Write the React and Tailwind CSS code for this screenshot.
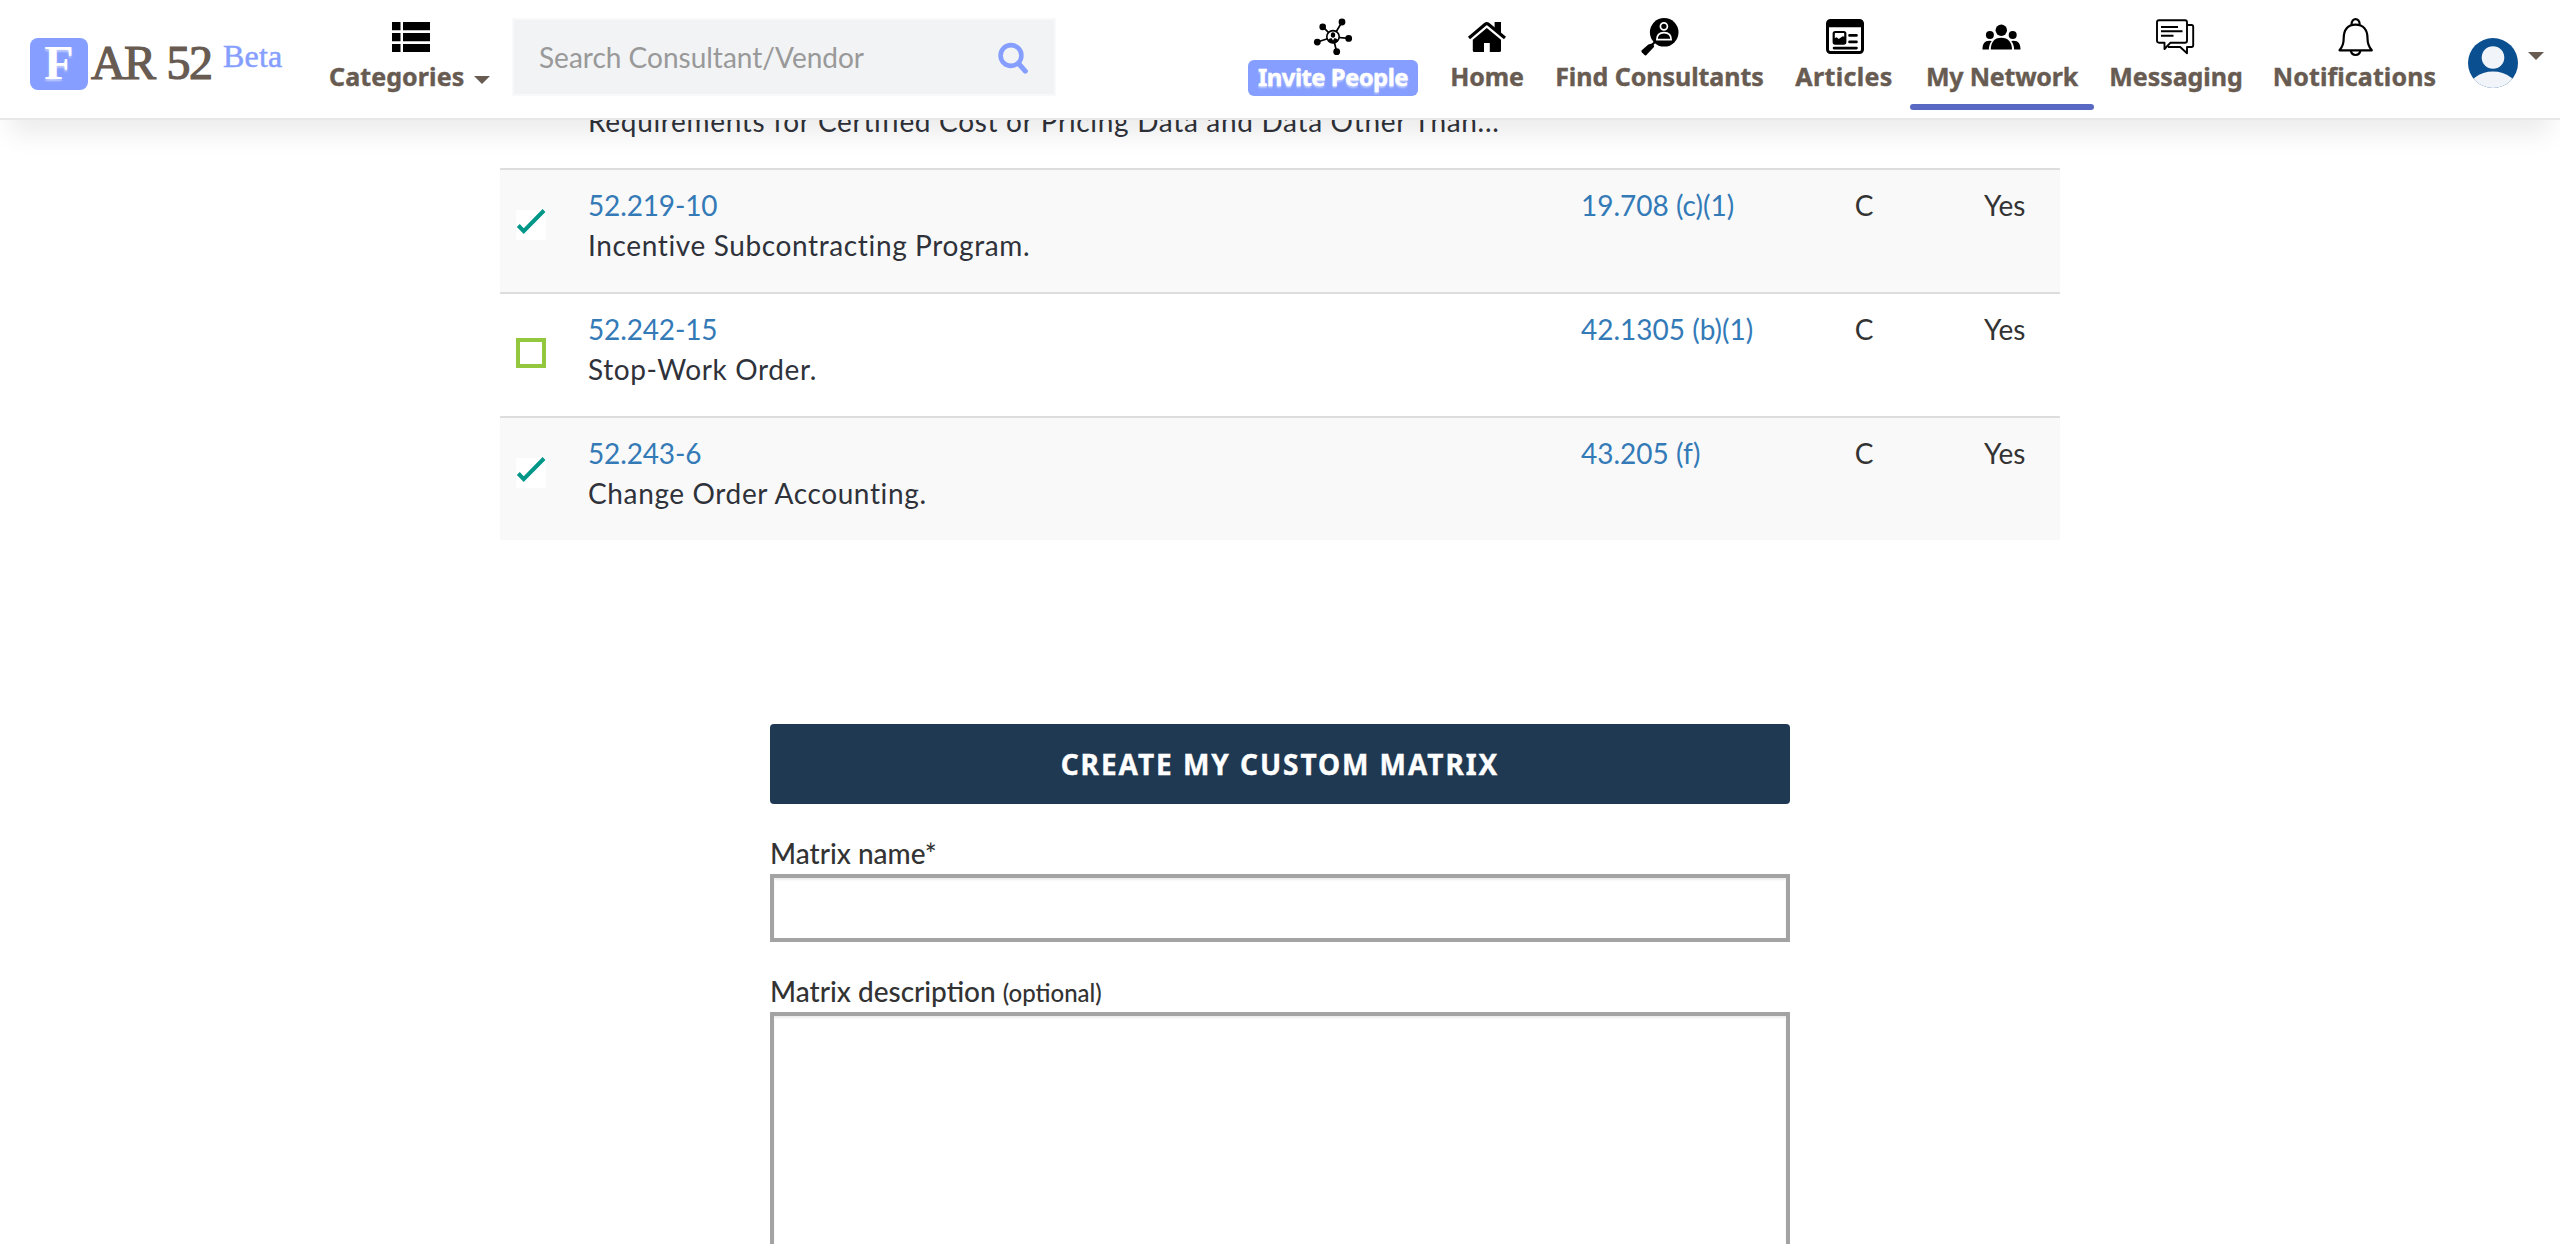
import React from "react";

function Icon({ children }) {
  return (
    <svg width="40" height="60" viewBox="0 0 40 60" fill="none" className="block shrink-0">
      {children}
    </svg>
  );
}

const InviteIcon = () => (
  <Icon>
    <g stroke="#000" strokeWidth="1.7">
      <path d="M20 37L9.7 26.7M20 37L29 22M20 37L35.7 38.3M20 37L23.7 51.7M20 37L4.3 42" />
    </g>
    <g fill="#000">
      <circle cx="9.7" cy="26.9" r="3.3" />
      <circle cx="29" cy="22" r="3.4" />
      <circle cx="35.7" cy="38.4" r="3.4" />
      <circle cx="23.7" cy="51.7" r="3.4" />
      <circle cx="4.3" cy="42.1" r="3.4" />
    </g>
    <circle cx="20" cy="36.8" r="6.2" fill="#fff" stroke="#000" strokeWidth="1.6" />
    <ellipse cx="20" cy="35" rx="2.2" ry="2.8" fill="#000" />
    <path d="M14.6 40c1.4-1.4 3-1.8 4.1-1.8L20 40.5l1.3-2.3c1.1 0 2.7.4 4.1 1.8-1 2-3 3.2-5.4 3.2s-4.4-1.2-5.4-3.2z" fill="#000" />
  </Icon>
);

const HomeIcon = () => (
  <Icon>
    <path fill="#000" d="M27.6 22H34v12l-6.4-5.5z" />
    <path d="M2 38L18.2 24.3q1.6-1.3 3.2 0L38 38" stroke="#000" strokeWidth="3.2" />
    <path fill="#000" d="M5.8 39.8L19.8 28L34 39.8V50.5q0 1.5-1.5 1.5H22.8V43h-5.8v9H7.3q-1.5 0-1.5-1.5z" />
  </Icon>
);

const FindIcon = () => (
  <Icon>
    <circle cx="24.2" cy="32.3" r="14.3" fill="#000" />
    <path d="M15.8 41L12 45" stroke="#000" strokeWidth="2" />
    <path d="M8.3 44.500l4.7-1.3 1.2 3.5-8 8.5q-1 .6-2-.4l-2.4-2.6q-.8-1 0-2z" fill="#000" />
    <circle cx="23.9" cy="26.3" r="3.5" stroke="#fff" strokeWidth="1.7" />
    <path d="M16.9 39.6q0-7 7.1-7t7.1 7z" stroke="#fff" strokeWidth="1.7" />
  </Icon>
);

const ArticlesIcon = () => (
  <Icon>
    <rect x="3.5" y="20.5" width="35" height="32" rx="3" stroke="#000" strokeWidth="3" />
    <path d="M3.5 21h35v6.300h-35z" fill="#000" />
    <rect x="9.7" y="32" width="11.6" height="11.6" rx="1.5" stroke="#000" strokeWidth="2.2" />
    <path d="M9.7 38.500l3-1.2 2 1.7 4-2.7 2.6.7v6.600H9.700z" fill="#000" />
    <path d="M25.5 35.400h7M25.5 41.900h7M10 48.100h22.500" stroke="#000" strokeWidth="2.6" strokeLinecap="round" />
  </Icon>
);

const NetworkIcon = () => (
  <Icon>
    <g fill="#000">
      <circle cx="19.3" cy="30.2" r="5.7" />
      <circle cx="7.9" cy="35" r="4" />
      <circle cx="30.7" cy="35" r="4" />
      <path d="M8.8 49.500c0-7 3.5-11.700 10.500-11.700s10.700 4.700 10.700 11.700z" />
      <path d="M.5 49.500c0-5.500 2-8.700 7-8.700l2.200.2c-1.700 2-2.700 5-2.900 8.500zM38.500 49.500c0-5.500-2-8.700-7-8.700l-2.200.2c1.700 2 2.700 5 2.900 8.500z" />
    </g>
  </Icon>
);

const MessagingIcon = () => (
  <Icon>
    <g stroke="#000" strokeWidth="1.9" strokeLinejoin="round">
      <path d="M3 20.300h26q2 0 2 2v18.400q0 2-2 2H14.500L8.500 49v-6.300H3q-2 0-2-2V22.300q0-2 2-2z" />
      <path d="M31 25h4.500q1.700 0 1.700 1.700v18.600q0 1.700-1.700 1.700H31v6.300L24.200 47H12" />
      <path d="M5 27h17M5 31.300h21.500M5 35.700h12.500" />
    </g>
  </Icon>
);

const BellIcon = () => (
  <Icon>
    <g stroke="#000" strokeWidth="2.2" strokeLinejoin="round">
      <path d="M4.500 50.300h32.300c-3-3.300-4.300-6.500-4.300-12 0-8.500-4.300-13.600-12-13.600S8.700 29.800 8.700 38.300c0 5.500-1.200 8.700-4.200 12z" />
      <path d="M16.500 24.800c0-7.600 8.200-7.600 8.200 0M15.800 50.500c1 6 8.600 6 9.600 0" />
    </g>
  </Icon>
);

const navItems = [
  { label: "Home", Art: HomeIcon, box: "w-[104px]", text: "tracking-[-0.2px]" },
  { label: "Find Consultants", Art: FindIcon, box: "w-[241px]", text: "tracking-[-0.05px]" },
  { label: "Articles", Art: ArticlesIcon, box: "w-[128px]", text: "tracking-[0.33px]" },
  { label: "My Network", Art: NetworkIcon, box: "ml-[2px] w-[184px]", text: "tracking-[-0.22px]", active: true },
  { label: "Messaging", Art: MessagingIcon, box: "w-[164px]", text: "tracking-[-0.07px]" },
  { label: "Notifications", Art: BellIcon, box: "w-[193px]", text: "tracking-[0.1px]" },
];

function Header() {
  return (
    <header className="relative z-10 flex h-[120px] w-full items-start border-b-2 border-[#e7e7e7] bg-white pl-[30px] text-[#675b52] shadow-[0_24px_24px_-10px_rgba(0,0,0,0.08)]">
      <div className="mt-[38px] flex w-[276px] items-start font-['Liberation_Serif',serif]">
        <div className="flex h-[52px] w-[58px] justify-center rounded-[8px] bg-[#869eff] pt-px text-[48px] leading-[48px] font-bold text-white [text-shadow:0_2px_2px_rgba(255,255,255,0.5)]">
          F
        </div>
        <div className="ml-[3px] w-[132px] pt-px text-[48px] leading-[48px] tracking-[-1.7px] [word-spacing:2px] whitespace-nowrap [-webkit-text-stroke:1.2px_#675b52]">
          AR 52
        </div>
        <div className="pt-[3px] text-[32px] leading-[30px] tracking-[0.2px] text-[#869eff] [-webkit-text-stroke:0.5px_#869eff]">
          Beta
        </div>
      </div>

      <div className="ml-[23px] w-[183px] font-['Noto_Sans',sans-serif]">
        <div className="flex h-[60px] pl-[63px] pt-[22px]">
          <svg width="38" height="30" viewBox="0 0 38 30" className="block">
            <path fill="#000" d="M0 0h8.500v8.300H0zM11 0h27v8.300H11zM0 11h8.500v8.200H0zM11 11h27v8.200H11zM0 22h8.500v8H0zM11 22h27v8H11z" />
          </svg>
        </div>
        <div className="flex text-[25px] leading-[32px] font-bold tracking-[0.1px] [-webkit-text-stroke:0.4px_#675b52]">
          Categories
          <span className="mt-4 ml-[10px] h-0 w-0 border-x-[8px] border-t-[8px] border-x-transparent border-t-[#675b52]" />
        </div>
      </div>

      <div className="mt-[18px] flex h-[78px] w-[544px] items-start justify-between border-2 border-[#f8f9fa] bg-[#f1f3f5] pt-[17px] pr-[25px] pl-[25px] text-[28px] leading-[40px] text-[#999]">
        <span>Search Consultant/Vendor</span>
        <svg width="32" height="34" viewBox="0 0 32 34" fill="none" className="mt-[5px] block">
          <circle cx="14" cy="13.5" r="10.4" stroke="#869eff" strokeWidth="4.6" />
          <path d="M21.5 21.500l6.800 7.700" stroke="#869eff" strokeWidth="5" strokeLinecap="round" />
        </svg>
      </div>

      <nav className="ml-[192px] flex font-['Noto_Sans',sans-serif] text-[25px] leading-[32px] font-bold whitespace-nowrap">
        <div className="mr-[17px] flex w-[170px] flex-col items-center">
          <InviteIcon />
          <div className="flex h-9 w-[170px] justify-center rounded-[6px] bg-[#869eff] text-[24px] leading-[34px] tracking-[-0.6px] text-white [-webkit-text-stroke:0.4px_#fff] [text-shadow:0_2px_2px_rgba(255,255,255,0.45)]">
            Invite People
          </div>
        </div>
        {navItems.map(({ label, Art, box, text, active }) => (
          <div key={label} className={`flex flex-col items-center ${box}`}>
            <Art />
            <span className={`[-webkit-text-stroke:0.4px_#675b52] ${text}`}>{label}</span>
            {active && <div className="mt-[12px] h-[6px] w-full rounded-[3px] bg-[#5869c4]" />}
          </div>
        ))}
      </nav>

      <div className="mt-[38px] ml-[17px] flex">
        <svg width="50" height="50" viewBox="0 0 50 50" className="block">
          <defs>
            <clipPath id="avatar">
              <circle cx="25" cy="25" r="25" />
            </clipPath>
          </defs>
          <g clipPath="url(#avatar)">
            <rect width="50" height="50" fill="#0a4f8f" />
            <circle cx="25" cy="19.5" r="11.3" fill="#f1f5fa" />
            <ellipse cx="25" cy="53" rx="25" ry="19.5" fill="#f1f5fa" />
          </g>
        </svg>
        <span className="mt-[14px] ml-[10px] h-0 w-0 border-x-[8px] border-t-[8px] border-x-transparent border-t-[#675b52]" />
      </div>
    </header>
  );
}

const rows = [
  { clause: "52.219-10", title: "Incentive Subcontracting Program.", cite: "19.708 (c)(1)", checked: true },
  { clause: "52.242-15", title: "Stop-Work Order.", cite: "42.1305 (b)(1)", checked: false },
  { clause: "52.243-6", title: "Change Order Accounting.", cite: "43.205 (f)", checked: true },
];

function Row({ clause, title, cite, checked }) {
  return (
    <div className={`flex h-[124px] border-t-2 border-[#ddd] pt-[15px] pl-4 leading-[40px] ${checked ? "bg-[#f9f9f9]" : "bg-white"}`}>
      {checked ? (
        <div className="mt-[25px] h-[30px] w-[30px] shrink-0 bg-white">
          <svg width="30" height="30" viewBox="0 0 30 30" fill="none" className="block overflow-visible">
            <path d="M2.3 15.500l5.400 5.600L28 .500" stroke="#009688" strokeWidth="4" />
          </svg>
        </div>
      ) : (
        <div className="mt-[29px] h-[30px] w-[30px] shrink-0 border-4 border-[#93c83e]" />
      )}
      <div className="ml-[42px] w-[993px] shrink-0">
        <div className="tracking-[-0.15px] text-[#337ab7]">{clause}</div>
        <div className="tracking-[0.63px] text-[#2f323a]">{title}</div>
      </div>
      <div className="w-[234px] shrink-0 text-[#337ab7]">{cite}</div>
      <div className="w-[98px] shrink-0 text-center">C</div>
      <div className="flex-1 pl-[71px]">Yes</div>
    </div>
  );
}

const field = "w-full border-4 border-[#a3a3a3] bg-white shadow-[inset_0_2px_2px_rgba(0,0,0,0.075)]";

export default function App() {
  return (
    <div className="h-[1244px] w-[2560px] overflow-hidden bg-white font-['Lato',sans-serif] text-[28px] text-[#333]">
      <Header />
      <div className="mx-auto -mt-[20px] w-[1560px]">
        <div className="h-[68px] pl-[88px] pt-px leading-[40px] tracking-[0.68px] text-[#2f323a]">
          Requirements for Certified Cost or Pricing Data and Data Other Than...
        </div>
        {rows.map((row) => (
          <Row key={row.clause} {...row} />
        ))}
      </div>
      <div className="mx-auto mt-[184px] w-[1020px]">
        <button className="block h-20 w-full rounded-[4px] bg-[#1f3953] font-['Noto_Sans',sans-serif] font-bold tracking-[1.95px] text-white [-webkit-text-stroke:0.4px_#fff]">
          CREATE MY CUSTOM MATRIX
        </button>
        <div className="mt-[29px] h-[40px] leading-[40px] font-medium">Matrix name*</div>
        <div className={`mt-px h-[68px] ${field}`} />
        <div className="mt-[29px] h-[40px] leading-[40px] font-medium">
          Matrix description <span className="text-[24px] leading-none">(optional)</span>
        </div>
        <div className={`mt-px h-[300px] ${field}`} />
      </div>
    </div>
  );
}
